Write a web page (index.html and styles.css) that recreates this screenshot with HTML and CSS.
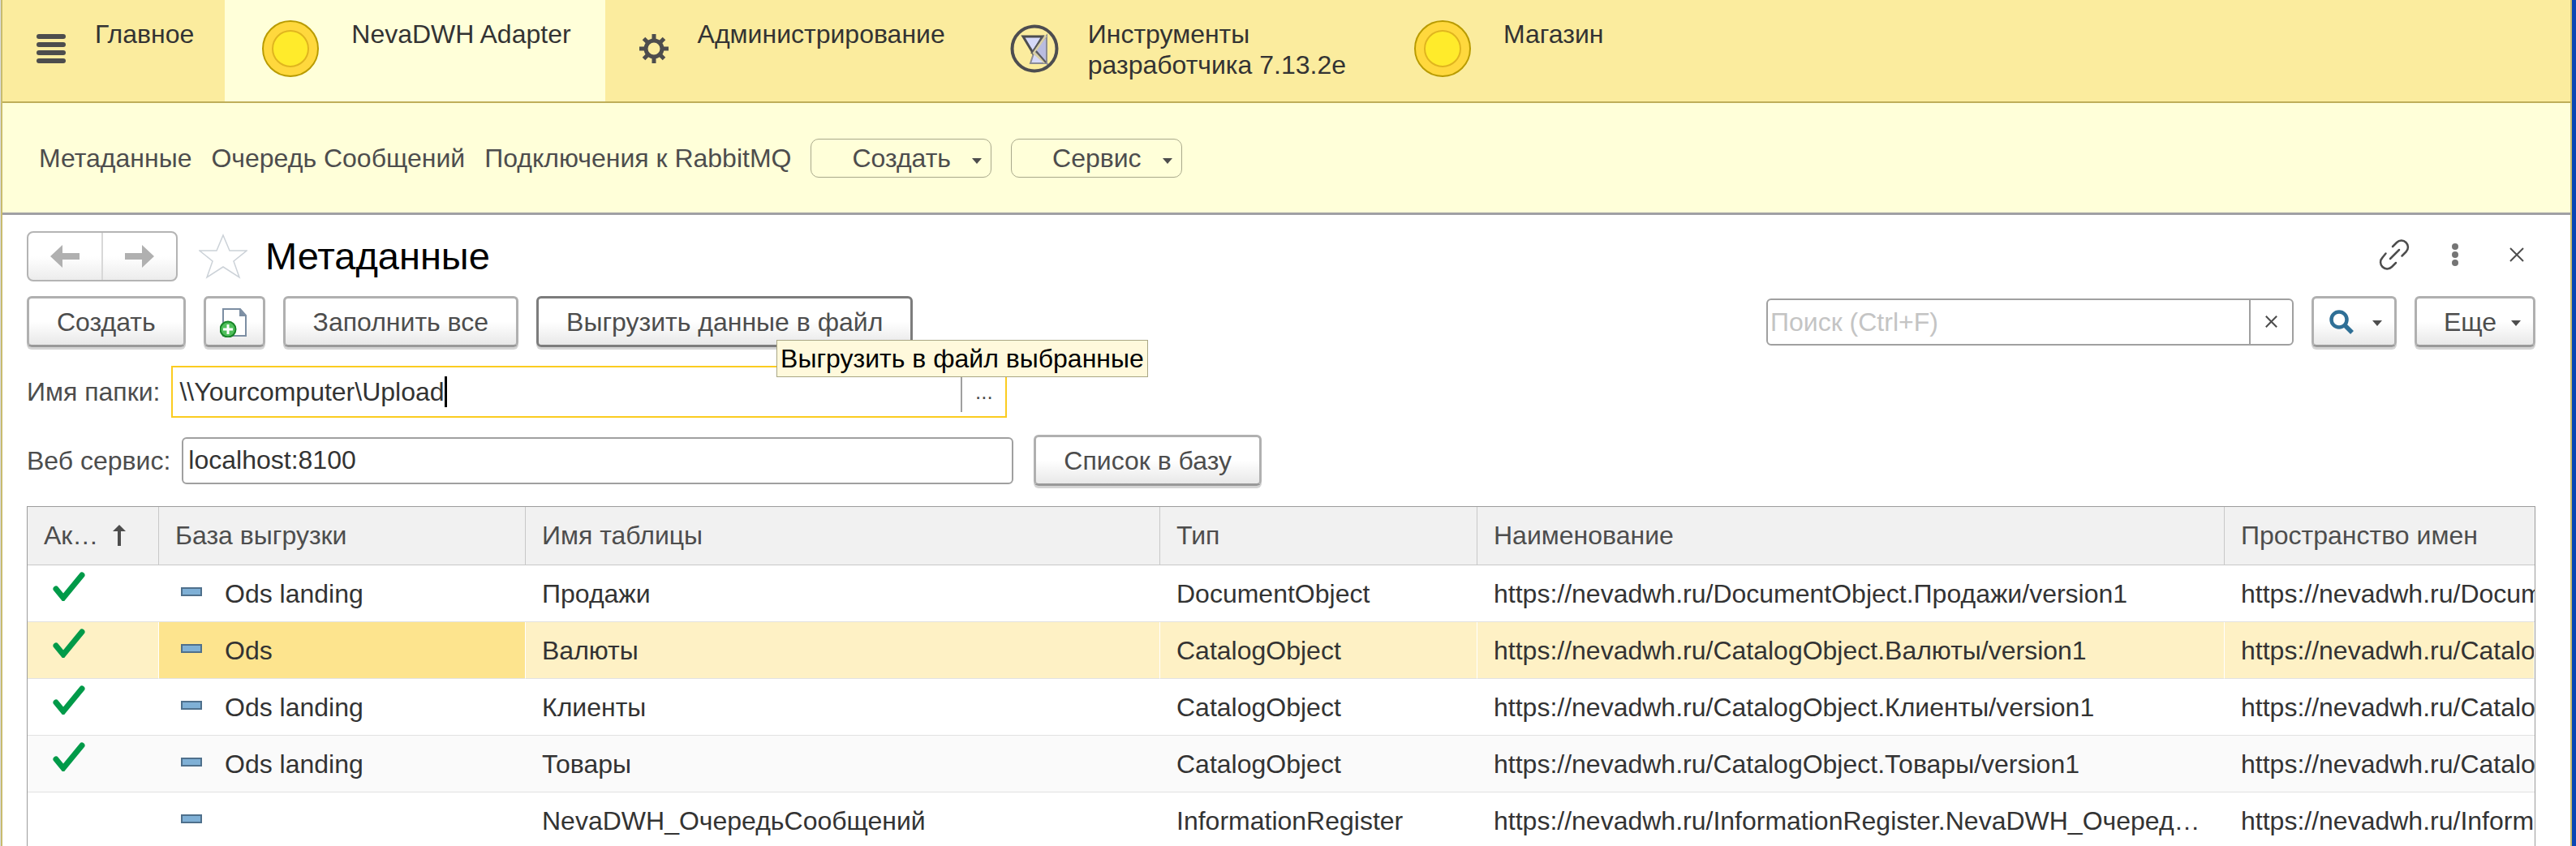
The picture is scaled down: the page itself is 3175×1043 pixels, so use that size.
FILE: index.html
```html
<!DOCTYPE html>
<html lang="ru">
<head>
<meta charset="utf-8">
<title>Метаданные</title>
<link rel="stylesheet" href="styles.css">
</head>
<body>
<div class="app">
  <nav class="sections">
    <a class="section" href="#">
      <svg class="icon-36" viewBox="0 0 36 36"><g fill="#4d4d4d"><rect y="0" width="36" height="6" rx="3"/><rect y="10" width="36" height="6" rx="3"/><rect y="20" width="36" height="6" rx="3"/><rect y="30" width="36" height="6" rx="3"/></g></svg>
      <span>Главное</span>
    </a>
    <a class="section section-active" href="#">
      <svg class="icon-coin" viewBox="0 0 78 72"><circle cx="39" cy="36" r="34" fill="#ffd83d" stroke="#b99b00" stroke-width="2"/><circle cx="39" cy="36" r="22" fill="#ffeb2b" stroke="#e0b51f" stroke-width="2"/></svg>
      <span>NevaDWH Adapter</span>
    </a>
    <a class="section" href="#">
      <svg class="icon-36" viewBox="0 0 36 36"><g stroke="#4d4d4d" stroke-width="5" fill="none"><circle cx="18" cy="18" r="10" stroke-width="5"/><path d="M18 0v7M18 29v7M0 18h7M29 18h7M5.500 5.500l5 5M25.500 25.500l5 5M30.500 5.500l-5 5M10.500 25.500l-5 5"/></g></svg>
      <span>Администрирование</span>
    </a>
    <a class="section" href="#">
      <svg class="icon-tools" viewBox="0 0 60 60"><circle cx="30" cy="30" r="27.500" fill="none" stroke="#4d4d50" stroke-width="4"/><path d="M45 14v34L30 32z" fill="#b9bce0" stroke="#8c8c94" stroke-width="2"/><path d="M30 33l-5 15h20z" fill="#d6d9f8" stroke="#8c8c94" stroke-width="2"/><path d="M16 15h24L28 35z" fill="#d6d9f8" stroke="#4d4d50" stroke-width="3"/><path d="M44 14L29 35l14 12" fill="none" stroke="#d8cfa6" stroke-width="3"/><path d="M41 14L26 36M32 33l12 14" fill="none" stroke="#5a5a5e" stroke-width="2"/></svg>
      <span>Инструменты<br>разработчика 7.13.2e</span>
    </a>
    <a class="section" href="#">
      <svg class="icon-coin" viewBox="0 0 78 72"><circle cx="39" cy="36" r="34" fill="#ffd83d" stroke="#b99b00" stroke-width="2"/><circle cx="39" cy="36" r="22" fill="#ffeb2b" stroke="#e0b51f" stroke-width="2"/></svg>
      <span>Магазин</span>
    </a>
  </nav>

  <nav class="commands">
    <a href="#">Метаданные</a>
    <a href="#">Очередь Сообщений</a>
    <a href="#">Подключения к RabbitMQ</a>
    <button class="menu-button" type="button">Создать<svg class="caret" viewBox="0 0 14 8"><path d="M0 0h14L7 8z"/></svg></button>
    <button class="menu-button" type="button">Сервис<svg class="caret" viewBox="0 0 14 8"><path d="M0 0h14L7 8z"/></svg></button>
  </nav>

  <main class="form">
    <header class="form-header">
      <div class="history">
        <button type="button" aria-label="Назад"><svg class="arrow" viewBox="0 0 36 28"><path d="M0 14L15 0v10h21v8H15v10z"/></svg></button>
        <button type="button" aria-label="Вперед"><svg class="arrow" viewBox="0 0 36 28"><path d="M36 14L21 0v10H0v8h21v10z"/></svg></button>
      </div>
      <svg class="star" viewBox="0 0 60 56"><path d="M30 2l8 19h21L43 34l7 20-20-13-20 13 7-20L1 21h21z" fill="#fff" stroke="#ccd2d8" stroke-width="1.500"/></svg>
      <h1>Метаданные</h1>
      <div class="form-tools">
        <button type="button" aria-label="Ссылка"><svg class="icon-link" viewBox="0 0 38 38"><g fill="none" stroke="#4d4d4d" stroke-width="2.500" stroke-linecap="round"><path d="M17 9l5-5c3.500-3.500 8.500-3 11.500 0s3.500 8 0 11.500l-5 5"/><path d="M21 29l-5 5c-3.500 3.500-8.500 3-11.500 0s-3.500-8 0-11.500l4-5"/><path d="M14 24l11-11"/></g></svg></button>
        <button type="button" aria-label="Меню"><svg class="icon-dots" viewBox="0 0 8 28"><g fill="#757575"><circle cx="4" cy="4" r="4"/><circle cx="4" cy="14" r="4"/><circle cx="4" cy="24" r="4"/></g></svg></button>
        <button type="button" aria-label="Закрыть"><svg class="icon-close" viewBox="0 0 18 18"><path d="M1 1l16 16M17 1L1 17" stroke="#4d4d4d" stroke-width="2"/></svg></button>
      </div>
    </header>

    <div class="toolbar">
      <button class="button" type="button">Создать</button>
      <button class="button button-icon" type="button" aria-label="Создать копированием"><svg class="icon-copy" viewBox="0 0 36 38"><path d="M4 3h21l7 8v25H4z" fill="#fff" stroke="#7c8ea3" stroke-width="2"/><path d="M24 3l8 9h-8z" fill="#7c8ea3"/><circle cx="10" cy="28" r="9.500" fill="#4fbf5b" stroke="#178427" stroke-width="2"/><path d="M10 22v12M4 28h12" stroke="#fff" stroke-width="3"/></svg></button>
      <button class="button" type="button">Заполнить все</button>
      <div class="with-tooltip">
        <button class="button button-hover" type="button">Выгрузить данные в файл</button>
        <div class="tooltip" role="tooltip">Выгрузить в файл выбранные</div>
      </div>
      <div class="search">
        <input type="text" placeholder="Поиск (Ctrl+F)" aria-label="Поиск">
        <button type="button" aria-label="Очистить"><svg class="icon-clear" viewBox="0 0 18 18"><path d="M1 1l16 16M17 1L1 17" stroke="#4d4d4d" stroke-width="2.500"/></svg></button>
      </div>
      <button class="button button-find" type="button" aria-label="Найти"><svg class="icon-find" viewBox="0 0 30 30"><circle cx="12" cy="12" r="9.500" fill="none" stroke="#2f6f96" stroke-width="4.500"/><path d="M19 19l9 9" stroke="#2f6f96" stroke-width="5.500"/></svg><svg class="caret" viewBox="0 0 14 8"><path d="M0 0h14L7 8z"/></svg></button>
      <button class="button button-more" type="button">Еще<svg class="caret" viewBox="0 0 14 8"><path d="M0 0h14L7 8z"/></svg></button>
    </div>

    <div class="field field-folder">
      <label for="folder">Имя папки:</label>
      <div class="folder-box">
        <div class="folder-value"><input id="folder" type="text" value="\\Yourcomputer\Upload"><span class="text-cursor"></span></div>
        <button type="button" aria-label="Выбрать">...</button>
      </div>
    </div>
    <div class="field field-service">
      <label for="service">Веб сервис:</label>
      <input id="service" class="service-box" type="text" value="localhost:8100">
      <button class="button" type="button">Список в базу</button>
    </div>

    <div class="grid">
      <table>
        <colgroup><col class="col-active"><col class="col-base"><col class="col-table"><col class="col-type"><col class="col-name"><col class="col-space"></colgroup>
        <thead>
          <tr>
            <th><div class="sorted">Ак…<svg class="icon-sort" viewBox="0 0 16 26"><path d="M8 0l8 8H10v18H6V8H0z" fill="#4d4d4d"/></svg></div></th>
            <th>База выгрузки</th><th>Имя таблицы</th><th>Тип</th><th>Наименование</th><th>Пространство имен</th>
          </tr>
        </thead>
        <tbody>
          <tr>
            <td><svg class="check" viewBox="0 0 40 36"><path d="M4 21l9 11L36 4" /></svg></td>
            <td><div class="item"><span class="mark"></span>Ods landing</div></td>
            <td>Продажи</td><td>DocumentObject</td><td>https://nevadwh.ru/DocumentObject.Продажи/version1</td><td class="cut">https://nevadwh.ru/Docum</td>
          </tr>
          <tr class="selected">
            <td><svg class="check" viewBox="0 0 40 36"><path d="M4 21l9 11L36 4" /></svg></td>
            <td class="current"><div class="item"><span class="mark"></span>Ods</div></td>
            <td>Валюты</td><td>CatalogObject</td><td>https://nevadwh.ru/CatalogObject.Валюты/version1</td><td class="cut">https://nevadwh.ru/Catalo</td>
          </tr>
          <tr>
            <td><svg class="check" viewBox="0 0 40 36"><path d="M4 21l9 11L36 4" /></svg></td>
            <td><div class="item"><span class="mark"></span>Ods landing</div></td>
            <td>Клиенты</td><td>CatalogObject</td><td>https://nevadwh.ru/CatalogObject.Клиенты/version1</td><td class="cut">https://nevadwh.ru/Catalo</td>
          </tr>
          <tr>
            <td><svg class="check" viewBox="0 0 40 36"><path d="M4 21l9 11L36 4" /></svg></td>
            <td><div class="item"><span class="mark"></span>Ods landing</div></td>
            <td>Товары</td><td>CatalogObject</td><td>https://nevadwh.ru/CatalogObject.Товары/version1</td><td class="cut">https://nevadwh.ru/Catalo</td>
          </tr>
          <tr>
            <td></td>
            <td><div class="item"><span class="mark"></span></div></td>
            <td>NevaDWH_ОчередьСообщений</td><td>InformationRegister</td><td>https://nevadwh.ru/InformationRegister.NevaDWH_Очеред…</td><td class="cut">https://nevadwh.ru/Inform</td>
          </tr>
        </tbody>
      </table>
    </div>
  </main>
</div>
</body>
</html>
```
FILE: styles.css
```css
* { box-sizing: border-box; }

body {
  margin: 0;
  background: #0a46b4;
  border-left: 1px solid #d9dce0;
  font: 32px/38px "Liberation Sans", Arial, sans-serif;
  color: #333;
}

button, input { font: inherit; color: #4d4d4d; margin: 0; padding: 0; border: 0; background: none; }
input { min-width: 0; outline: 0; color: #333; }
a { color: inherit; text-decoration: none; }
svg { display: block; flex: none; }

.app {
  height: 100vh;
  overflow: hidden;
  margin-right: 5px;
  border-left: 2px solid #c8bb6e;
  border-right: 2px solid #c8bb6e;
  background: #fff;
}

/* Section panel */
.sections { display: flex; height: 127px; background: #fbec9e; border-bottom: 2px solid #bfae5a; }
.section { display: flex; gap: 36px; padding: 0 38px 0 42px; white-space: nowrap; }
.section span { padding-top: 23px; }
.section svg { margin-bottom: 5px; align-self: center; }
.section-active { padding-right: 42px; background: #ffffd9; }
.icon-36 { width: 36px; height: 36px; }
.icon-coin { width: 78px; height: 72px; }
.icon-tools { width: 60px; height: 60px; }

/* Command panel */
.commands {
  display: flex;
  align-items: center;
  gap: 24px;
  height: 138px;
  padding: 0 45px;
  background: #ffffd9;
  border-bottom: 3px solid #a0a0a4;
  color: #4d4d4d;
  white-space: nowrap;
}
.menu-button {
  display: flex;
  align-items: center;
  gap: 26px;
  height: 48px;
  padding: 0 11px 0 50px;
  border: 1px solid #a9a98c;
  border-radius: 10px;
}
.caret { width: 12px; height: 7px; margin-top: 4px; fill: #4d4d4d; }
.menu-button .caret { margin-top: 8px; }

/* Form */
.form { padding: 20px 43px 0 30px; }
.form-header { display: flex; align-items: center; height: 62px; }
.history {
  display: flex;
  width: 186px;
  height: 62px;
  border: 2px solid #b4b4b4;
  border-radius: 8px;
  background: linear-gradient(#fff 50%, #ececec);
}
.history button { flex: 1; display: grid; place-items: center; }
.history button + button { border-left: 2px solid #d8d8d8; }
.arrow { width: 36px; height: 28px; fill: #b0b0b0; }
.star { width: 60px; height: 56px; margin: 0 22px 0 26px; }
h1 { margin: 0; font-size: 47px; line-height: 54px; font-weight: 400; color: #000; }
.form-tools { display: flex; align-items: center; margin-left: auto; padding: 0 14px 4px 0; }
.form-tools button { display: block; }
.icon-link { width: 38px; height: 38px; margin-right: 52px; }
.icon-dots { width: 8px; height: 28px; margin-right: 63px; }
.icon-close { width: 18px; height: 18px; }

.button {
  height: 63px;
  padding: 0 34px;
  border: 3px solid #b0b0b0;
  border-bottom-color: #999;
  border-radius: 6px;
  background: linear-gradient(#fff 50%, #e8e8e8);
  box-shadow: 0 3px 0 #d4d4d4;
  white-space: nowrap;
}
.button-hover { border-color: #7c7c7c; }
.toolbar { display: flex; align-items: center; gap: 22px; margin-top: 18px; }
.button-icon { width: 76px; display: grid; place-items: center; padding: 0; }
.icon-copy { width: 36px; height: 38px; }
.with-tooltip { position: relative; }
.tooltip {
  position: absolute;
  left: 296px;
  top: 54px;
  z-index: 1;
  padding: 3px 4px;
  border: 1px solid #a9a684;
  background: #fff9dc;
  color: #000;
  white-space: nowrap;
}
.search {
  display: flex;
  width: 650px;
  height: 58px;
  margin-left: auto;
  border: 2px solid #a0a0a0;
  border-radius: 6px;
}
.search input { flex: 1; padding-left: 3px; }
.search input::placeholder { color: #c4c4c4; opacity: 1; }
.search button { width: 53px; display: grid; place-items: center; border-left: 2px solid #a0a0a0; }
.icon-clear { width: 15px; height: 15px; }
.button-find { display: flex; align-items: center; justify-content: space-between; width: 105px; padding: 0 15px 0 19px; }
.icon-find { width: 30px; height: 30px; }
.button-more { display: flex; align-items: center; justify-content: space-between; width: 149px; padding: 0 15px 0 33px; }

.field { display: flex; align-items: center; color: #4d4d4d; }
.field label { white-space: nowrap; }
.field-folder { margin-top: 23px; gap: 14px; }
.folder-box { display: flex; align-items: center; width: 1030px; height: 64px; border: 2px solid #fbcc20; }
.folder-value { flex: 1; display: flex; align-items: center; padding-left: 8px; }
.folder-value input { field-sizing: content; }
.text-cursor { width: 3px; height: 38px; background: #000; }
.folder-box button { width: 55px; height: 50px; border-left: 2px solid #a0a0a0; font-size: 26px; }
.field-service { margin-top: 21px; gap: 14px; }
.service-box { width: 1025px; height: 58px; padding: 0 6px; border: 2px solid #a0a0a0; border-radius: 6px; }
.field-service .button { margin-left: 11px; }

/* Data grid */
.grid { margin-top: 25px; border: 1px solid #9c9c9c; overflow: hidden; }
table { width: 100%; table-layout: fixed; border-collapse: separate; border-spacing: 0; }
.col-active { width: 162px; }
.col-base { width: 452px; }
.col-table { width: 782px; }
.col-type { width: 391px; }
.col-name { width: 921px; }
th, td { padding: 0 20px; text-align: left; font-weight: 400; white-space: nowrap; overflow: hidden; text-overflow: ellipsis; }
th { height: 72px; padding-bottom: 2px; background: #f1f1f1; color: #4d4d4d; border-right: 1px solid #c8c8c8; border-bottom: 1px solid #c8c8c8; }
td { height: 70px; border-bottom: 1px solid #e2e2e2; }
th:last-child { border-right: 0; }
.cut { padding-right: 0; text-overflow: clip; }
tbody tr:nth-child(even) { background: #fafafa; }
tbody .selected td { background: #fef1c5; border-right: 1px solid #fff; }
tbody .selected .current { background: #fde48e; }
.sorted { display: flex; align-items: center; gap: 18px; }
.icon-sort { width: 16px; height: 26px; }
.check { width: 40px; height: 36px; margin: 0 0 18px 11px; fill: none; stroke: #009a49; stroke-width: 7; stroke-linecap: round; }
.item { display: flex; align-items: center; gap: 28px; padding-left: 7px; }
.mark { width: 26px; height: 11px; margin-bottom: 4px; border: 2px solid #4f708c; background: #7fb0d6; }
```
